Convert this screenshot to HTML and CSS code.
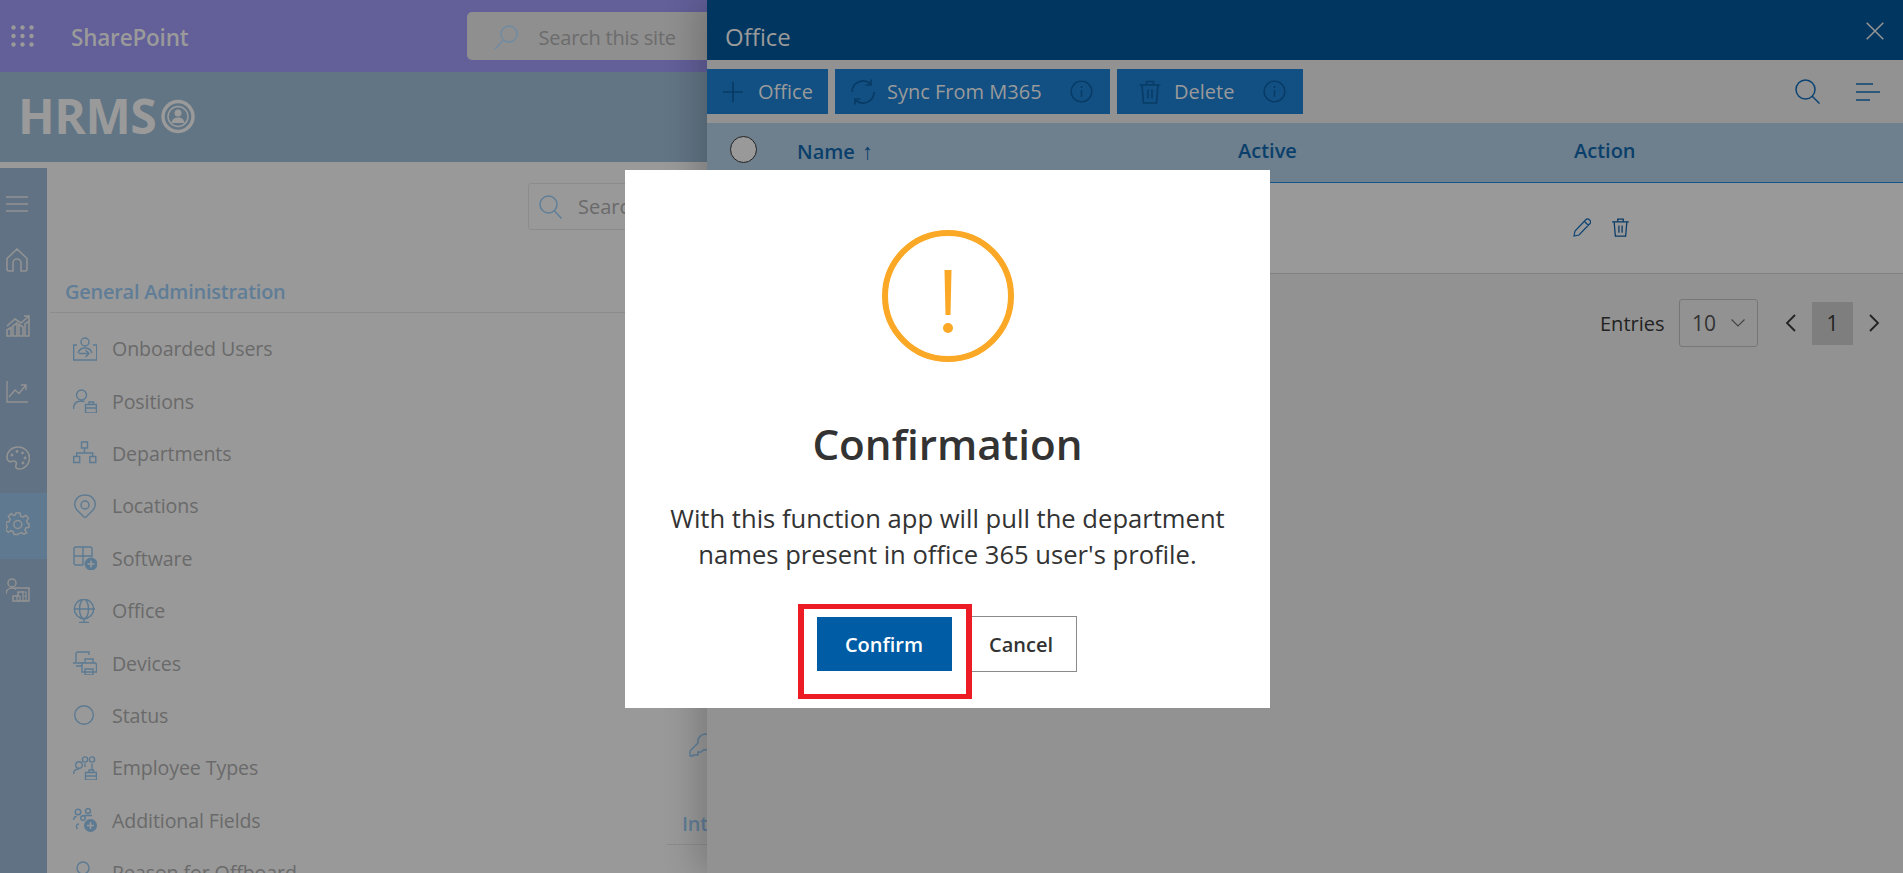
FILE: index.html
```html
<!DOCTYPE html>
<html lang="en">
<head>
<meta charset="utf-8">
<title>Office - HRMS</title>
<link rel="stylesheet" href="styles.css">
</head>
<body>
<svg class="defs" width="0" height="0" aria-hidden="true">
  <symbol id="i-trash" viewBox="0 0 24 24"><path d="M1.500 5h21M8.500 5V1.500h7V5M4 5l1.500 18h13L20 5M10 9.500v9M14 9.500v9" fill="none" stroke="currentColor" stroke-width="1.600"/></symbol>
  <symbol id="i-info" viewBox="0 0 24 24"><circle cx="12" cy="12" r="10.800" fill="none" stroke="currentColor" stroke-width="1.500"/><path d="M12 10.500v7" stroke="currentColor" stroke-width="1.500"/><circle cx="12" cy="7.300" r="1" fill="currentColor"/></symbol>
</svg>

<header class="topbar">
  <svg class="waffle" width="23" height="22" viewBox="0 0 23 22"><g fill="#9a9a9a"><circle cx="2.500" cy="2.500" r="2.200"/><circle cx="11.500" cy="2.500" r="2.200"/><circle cx="20.500" cy="2.500" r="2.200"/><circle cx="2.500" cy="11" r="2.200"/><circle cx="11.500" cy="11" r="2.200"/><circle cx="20.500" cy="11" r="2.200"/><circle cx="2.500" cy="19.500" r="2.200"/><circle cx="11.500" cy="19.500" r="2.200"/><circle cx="20.500" cy="19.500" r="2.200"/></g></svg>
  <span class="product">SharePoint</span>
  <div class="site-search">
    <svg width="26" height="26" viewBox="0 0 26 26"><circle cx="16" cy="10" r="8" fill="none" stroke="#6f8ba3" stroke-width="1.500"/><path d="M10.500 16 2 25" stroke="#6f8ba3" stroke-width="1.500"/></svg>
    <span>Search this site</span>
  </div>
</header>

<div class="brandbar">
  <span class="brand">HRMS</span>
  <svg width="34" height="35" viewBox="0 0 34 35"><circle cx="17" cy="17.500" r="15" fill="none" stroke="#9a9a9a" stroke-width="3.500"/><circle cx="17" cy="17.500" r="10" fill="none" stroke="#9a9a9a" stroke-width="1.500"/><circle cx="17" cy="14" r="3.500" fill="#9a9a9a"/><path d="M10.500 24c.5-4 3-5.500 6.500-5.500s6 1.500 6.500 5.500z" fill="#9a9a9a"/></svg>
</div>

<div class="main">
  <nav class="rail">
    <div class="rail-item rail-menu"><svg width="22" height="16" viewBox="0 0 22 16"><path d="M0 1h22M0 8h22M0 15h22" stroke="#929292" stroke-width="1.300"/></svg></div>
    <div class="rail-item"><svg width="22" height="24" viewBox="0 0 22 24"><path d="M1 10.500 11 1l10 9.500V21a2 2 0 0 1-2 2h-4v-8a3 3 0 0 0-8 0v8H3a2 2 0 0 1-2-2z" fill="none" stroke="#929292" stroke-width="1.600"/></svg></div>
    <div class="rail-item"><svg width="24" height="22" viewBox="0 0 24 22"><path d="M1 21v-6l4-2.500V21zM7 21V11l4-3v13zM13 21V9.500l4 2.500v9zM19 21V9l4-3v15z" fill="none" stroke="#929292" stroke-width="1.600"/><path d="M1 11 9 4l6 4 8-7M18 1h5v5" fill="none" stroke="#929292" stroke-width="1.600"/></svg></div>
    <div class="rail-item"><svg width="22" height="22" viewBox="0 0 22 22"><path d="M1 0v21h21M3 16l6-7 4 3.500L20 4M15 4h5v5" fill="none" stroke="#929292" stroke-width="1.400"/></svg></div>
    <div class="rail-item"><svg width="24" height="24" viewBox="0 0 24 24"><path d="M12 1C5.500 1 1 5.500 1 11.500c0 4 3 4.500 5.500 3.800 3-.8 4.500.7 3.500 3.700-.8 2.500.5 4 3 4 6 0 10.500-5 10.500-11S18.500 1 12 1z" fill="none" stroke="#929292" stroke-width="1.600"/><g fill="#929292"><circle cx="6" cy="9" r="1.400"/><circle cx="11" cy="5.500" r="1.400"/><circle cx="16.500" cy="7" r="1.400"/><circle cx="19" cy="12" r="1.400"/><circle cx="17" cy="17" r="1.400"/></g></svg></div>
    <div class="rail-item rail-active"><svg width="24" height="24" viewBox="0 0 24 24"><path d="M10 1h4l.7 3.200 2.200.9 2.800-1.800 2.800 2.800-1.800 2.800.9 2.200L23 11.800v3.400l-3.200.7-.9 2.200 1.800 2.800-2.800 1.300-2.200-1.500-2.700.6-1 1.300h-4l-.7-2.900-2.400-1-2.700 1.600-2.600-2.700 1.600-2.700-.9-2.300L0 13.800v-3.600l3.200-.7.900-2.300-1.700-2.800 2.800-2.600 2.700 1.700 1.400-.6z" fill="none" stroke="#929292" stroke-width="1.500"/><circle cx="11.800" cy="12.500" r="4" fill="none" stroke="#929292" stroke-width="1.500"/></svg></div>
    <div class="rail-item"><svg width="24" height="24" viewBox="0 0 24 24"><circle cx="6" cy="5" r="4" fill="none" stroke="#929292" stroke-width="1.500"/><path d="M0 16c0-3.500 2.500-6 6-6 1.500 0 3 .4 4 1.300" fill="none" stroke="#929292" stroke-width="1.500"/><path d="M9 10h14v13H7v-5h5v-4h6" fill="none" stroke="#929292" stroke-width="1.500"/><path d="M11 18h3v5h-3zM17 14h3v4h-3zM17 18h3v5h-3z" fill="none" stroke="#929292" stroke-width="1.200"/></svg></div>
  </nav>

  <section class="content">
    <div class="content-search">
      <div class="search-box">
        <svg width="23" height="24" viewBox="0 0 23 24"><circle cx="9.500" cy="9.500" r="8.500" fill="none" stroke="#5f7f99" stroke-width="1.500"/><path d="m15.500 16 7 7.500" stroke="#5f7f99" stroke-width="1.500"/></svg>
        <span>Search</span>
      </div>
    </div>
    <div class="columns">
      <div class="col-left">
        <h2 class="section-title">General Administration</h2>
        <ul class="menu">
          <li><svg viewBox="0 0 24 24"><path d="M4 8H.7v15h23V8H20" class="ln"/><circle cx="12" cy="5" r="4" class="ln"/><path d="M5 16c1-3 3.500-5 7-5s6 2 7 5M6 16.500h10M12.500 13l3.500 3.500-3.500 3.500" class="ln"/></svg>Onboarded Users</li>
          <li><svg viewBox="0 0 24 24"><circle cx="8.500" cy="6" r="5" class="ln"/><path d="M.5 20c0-5 3-8 8-8 1 0 2 .1 3 .5" class="ln"/><path d="M12.500 15.500h11V24h-11zM16 15.500V13h4.500v2.500M12.500 19h11" class="ln"/></svg>Positions</li>
          <li><svg viewBox="0 0 24 24"><path d="M8.500 1h6v6h-6zM.7 15.500h6v6h-6zM16.800 15.500h6v6h-6zM11.500 7v5M3.700 15.500V12h16v3.500" class="ln"/></svg>Departments</li>
          <li><svg viewBox="0 0 24 24"><path d="M12 24 4 16C-.500 11 2 1 12 1s12.500 10 8 15z" class="ln"/><circle cx="12" cy="11" r="4" class="ln"/></svg>Locations</li>
          <li><svg viewBox="0 0 24 24"><path d="M10 19H3a2 2 0 0 1-2-2V3a2 2 0 0 1 2-2h14a2 2 0 0 1 2 2v8M1 10h18M10 1v18" class="ln"/><circle cx="18" cy="18" r="6.500" class="fl"/><path d="M14.500 18h7M18 14.500v7" stroke="#999" stroke-width="1.500"/></svg>Software</li>
          <li><svg viewBox="0 0 24 24"><circle cx="11" cy="10" r="9.700" class="ln"/><ellipse cx="11" cy="10" rx="4.500" ry="9.700" class="ln"/><path d="M1 10h21M11 20v3M6 23.500h10" class="ln"/></svg>Office</li>
          <li><svg viewBox="0 0 24 24"><path d="M3 11V3a2 2 0 0 1 2-2h11v3M0 12h10M3 15h6" class="ln"/><path d="M9 12h13a2 2 0 0 1 1.500 2v7H9zM12 8h8v4h-8zM12 18h8v6h-8z" class="ln"/></svg>Devices</li>
          <li><svg viewBox="0 0 24 24"><circle cx="11" cy="12" r="9.300" class="ln"/></svg>Status</li>
          <li><svg viewBox="0 0 24 24"><circle cx="6" cy="9" r="3.300" class="ln"/><circle cx="12" cy="3.500" r="2.600" class="ln"/><circle cx="19" cy="3.500" r="2.600" class="ln"/><path d="M.5 18c0-3 2-5 5.500-5M12 7.500V11M19 7.500V14M12.500 16.500h11V24h-11zM16 16.500V14h4.500v2.500M12.500 20h11" class="ln"/></svg>Employee Types</li>
          <li><svg viewBox="0 0 24 24"><circle cx="5" cy="4" r="2.800" class="ln"/><circle cx="15" cy="3" r="2.500" class="ln"/><circle cx="10" cy="10" r="2.300" class="ln"/><path d="M.7 12c0-2 1-3.500 3-3.500M6 16c-2 0-4 2-1.500 5M11 7.500h8" class="ln"/><circle cx="17.500" cy="17.500" r="6.500" class="fl"/><path d="M14 17.500h7M17.500 14v7" stroke="#999" stroke-width="1.500"/></svg>Additional Fields</li>
          <li><svg viewBox="0 0 24 24"><circle cx="10" cy="7" r="6" class="ln"/><path d="M1 24c0-6 4-9 9-9" class="ln"/></svg>Reason for Offboard</li>
        </ul>
      </div>
      <div class="col-right">
        <svg class="key" width="28" height="24" viewBox="0 0 28 24"><path d="M4 23H1v-5l8-8c-1-5 3-9 8-9s9 4 9 8-4 8-9 8l-2-.5-3 2.500H9v3H4z" fill="none" stroke="#5f7f99" stroke-width="1.500"/></svg>
        <h2 class="section-title">Integration</h2>
      </div>
    </div>
  </section>
</div>

<aside class="panel">
  <div class="panel-head">
    <span class="panel-title">Office</span>
    <svg width="18" height="18" viewBox="0 0 18 18"><path d="M.7.700l16.600 16.600M17.300.700.700 17.300" stroke="#959595" stroke-width="1.500"/></svg>
  </div>
  <div class="toolbar">
    <button class="tool tool-add"><svg width="20" height="20" viewBox="0 0 20 20"><path d="M10 0v20M0 10h20" stroke="#083b66" stroke-width="1.700"/></svg>Office</button>
    <button class="tool tool-sync"><svg width="26" height="26" viewBox="0 0 26 26"><path d="M2 13A11 11 0 0 1 21 5.500M21 .5v5.500h-5.500M24 13A11 11 0 0 1 5 20.500M5 25.500V20h5.500" fill="none" stroke="#083b66" stroke-width="1.700"/></svg><span class="tool-label">Sync From M365</span><svg class="info" width="23" height="23"><use href="#i-info"/></svg></button>
    <button class="tool tool-del"><svg class="t-icon" width="24" height="24"><use href="#i-trash"/></svg><span class="tool-label">Delete</span><svg class="info" width="23" height="23"><use href="#i-info"/></svg></button>
    <div class="tool-right">
      <svg width="25" height="25" viewBox="0 0 25 25"><circle cx="10.500" cy="10.500" r="9.500" fill="none" stroke="#0b4373" stroke-width="1.500"/><path d="m17 17 7.500 7.500" stroke="#0b4373" stroke-width="1.500"/></svg>
      <svg width="24" height="18" viewBox="0 0 24 18"><path d="M0 1h17M0 9h24M0 17h14" stroke="#0b4373" stroke-width="1.500"/></svg>
    </div>
  </div>
  <div class="tbl-head">
    <div class="cell-check"><span class="radio"></span></div>
    <div class="cell-name">Name <span class="arrow">↑</span></div>
    <div class="cell-active">Active</div>
    <div class="cell-action">Action</div>
  </div>
  <div class="tbl-row">
    <div class="row-actions">
      <svg width="18" height="19" viewBox="0 0 18 19"><path d="M1 18l1-5L13 1.500a2 2 0 0 1 3 0l1 1a2 2 0 0 1 0 3L6 17zM11.500 3.500l4 4" fill="none" stroke="#0b4373" stroke-width="1.200"/></svg>
      <svg class="t-icon" width="19" height="19"><use href="#i-trash"/></svg>
    </div>
  </div>
  <div class="pager">
    <span class="pager-label">Entries</span>
    <div class="select"><span>10</span><svg width="14" height="8" viewBox="0 0 14 8"><path d="m.5.500 6.500 6.500 6.500-6.500" fill="none" stroke="#444" stroke-width="1.100"/></svg></div>
    <svg class="prev" width="12" height="18" viewBox="0 0 12 18"><path d="M10 1 2 9l8 8" fill="none" stroke="#222" stroke-width="1.800"/></svg>
    <span class="page">1</span>
    <svg class="next" width="12" height="18" viewBox="0 0 12 18"><path d="m2 1 8 8-8 8" fill="none" stroke="#222" stroke-width="1.800"/></svg>
  </div>
</aside>

<div class="dialog">
  <svg class="warn" width="132" height="132" viewBox="0 0 132 132"><circle cx="66" cy="66" r="63" fill="none" stroke="#faa825" stroke-width="6"/><path d="M62.500 40h7l-1 45h-5z" fill="#faa825"/><circle cx="66" cy="98" r="5" fill="#faa825"/></svg>
  <h1 class="dialog-title">Confirmation</h1>
  <p class="dialog-text">With this function app will pull the department<br>names present in office 365 user's profile.</p>
  <div class="dialog-actions">
    <button class="btn-confirm">Confirm<span class="callout"></span></button>
    <button class="btn-cancel">Cancel</button>
  </div>
</div>
</body>
</html>
```

FILE: styles.css
```css
* { box-sizing: border-box; }
html, body { margin: 0; height: 873px; overflow: hidden; }
body { background: #999; font-family: "Open Sans", "Liberation Sans", sans-serif; position: relative; color: #6a6a6a; }
.defs { position: absolute; }
svg { display: block; flex: none; }
button { font-family: inherit; border: 0; padding: 0; cursor: pointer; }

.topbar { height: 72px; background: #625f99; display: flex; align-items: center; padding-left: 11px; }
.product { margin: 2px 0 0 37px; font-size: 22.500px; font-weight: 600; color: #9a9a9a; letter-spacing: -.2px; }
.site-search { margin-left: 279px; width: 360px; height: 48px; background: #8f8f8f; border-radius: 5px; display: flex; align-items: center; padding: 2px 0 0 26px; gap: 19px; font-size: 20px; color: #6c6c6c; letter-spacing: -.2px; }

.brandbar { height: 90px; background: #627585; display: flex; align-items: center; padding: 0 0 2px 18px; gap: 5px; }
.brand { font-size: 48px; font-weight: 700; color: #9a9a9a; line-height: 1; letter-spacing: -.5px; }

.main { margin-top: 6px; display: flex; height: 705px; }
.rail { width: 47px; background: #607284; flex: none; display: flex; flex-direction: column; padding-top: 3px; }
.rail-item { height: 66px; display: flex; align-items: center; padding-left: 6px; flex: none; }
.rail-menu { height: 56px; padding-top: 10px; }
.rail-active { background: #5f7a90; margin: 2px 0 -2px; padding-bottom: 4px; }

.content { flex: 1; min-width: 0; }
.content-search { height: 111.500px; padding: 15px 0 0 481px; }
.search-box { width: 400px; height: 47px; border: 1px solid #8c8c8c; border-radius: 3px; display: flex; align-items: center; padding-left: 10px; gap: 16px; font-size: 20px; color: #6a6a6a; }
.columns { display: grid; grid-template-columns: 620px 1fr; }
.col-left { padding-left: 3px; }
.section-title { margin: 0; font-size: 19.900px; font-weight: 600; line-height: 23px; color: #607d97; letter-spacing: -.2px; padding: 0 0 9px 15px; border-bottom: 1px solid #8c8c8c; height: 23px; box-sizing: content-box; }
.menu { list-style: none; margin: 10px 0 0; padding: 0 0 0 23px; }
.menu li { height: 52.400px; display: flex; align-items: center; gap: 15px; font-size: 19.600px; color: #6a6a6a; letter-spacing: -.1px; }
.menu svg { width: 24px; height: 24px; }
.ln { fill: none; stroke: #5c7a92; stroke-width: 1.400; }
.fl { fill: #5c7a92; }
.col-right { padding-top: 453px; }
.key { margin: 0 0 55px 22px; }

.panel { position: absolute; left: 707px; top: 0; right: 0; bottom: 0; background: #929292; box-shadow: -12px 0 30px rgba(0,0,0,.18); display: flex; flex-direction: column; }
.panel-head { height: 60px; background: #003660; display: flex; align-items: center; justify-content: space-between; padding: 2px 19px 0 18px; }
.panel-title { font-size: 24px; color: #9a9a9a; margin-top: 10px; }
.toolbar { height: 63px; display: flex; align-items: flex-start; padding-top: 9px; gap: 7px; }
.tool { height: 45px; background: #125083; color: #9a9a9a; font-size: 20px; display: flex; align-items: center; }
.tool-add { width: 121px; padding-left: 16px; gap: 15px; }
.tool-sync { width: 275px; padding-left: 15px; gap: 11px; }
.tool-del { width: 186px; padding-left: 21px; gap: 12px; }
.tool-label { white-space: nowrap; }
.info { margin-left: auto; margin-right: 17px; color: #083b66; }
.t-icon { color: #083b66; }
.tool-right { margin-left: auto; height: 45px; display: flex; align-items: center; gap: 36px; padding-right: 23px; }
.tbl-head { height: 60px; padding-bottom: 5px; background: #6e7f8d; border-bottom: 1px solid #10568f; display: grid; grid-template-columns: 90px 441px 336px 1fr; align-items: center; font-size: 20px; font-weight: 600; color: #0a3f6b; }
.cell-check { padding: 0 0 2px 23px; }
.radio { display: block; width: 27px; height: 27px; border-radius: 50%; border: 1.500px solid #222; background: #999; }
.arrow { font-weight: 400; font-size: 22px; margin-left: 2px; }
.tbl-row { height: 91px; background: #999; border-bottom: 1px solid #808080; padding: 35px 0 0 866px; }
.row-actions { display: flex; gap: 20px; }
.pager { display: flex; align-items: center; height: 48px; margin-top: 25px; padding-left: 893px; font-size: 20px; color: #222; }
.pager-label { width: 79px; padding-top: 1px; }
.select { width: 79px; height: 48px; border: 1px solid #777; border-radius: 3px; display: flex; align-items: center; padding-left: 12px; gap: 15px; font-size: 21px; color: #333; }
.prev { margin-left: 27px; }
.page { width: 41px; height: 43px; margin: 0 15px 0 15px; background: #7e7e7e; display: flex; align-items: center; justify-content: center; font-size: 21px; }

.dialog { position: absolute; left: 625px; top: 170px; width: 645px; height: 538px; background: #fff; display: flex; flex-direction: column; align-items: center; padding-top: 60px; }
.dialog-title { margin: 54px 0 0; font-size: 42.200px; font-weight: 600; line-height: 56px; color: #333; }
.dialog-text { margin: 29px 0 0; font-size: 25.600px; line-height: 36px; text-align: center; color: #333; }
.dialog-actions { margin: 43px 0 0 -2px; display: flex; align-items: center; gap: 14px; }
.btn-confirm { position: relative; width: 135px; height: 54px; background: #005ca4; color: #fff; font-size: 20px; font-weight: 600; }
.callout { position: absolute; left: -19px; top: -13px; width: 174px; height: 95px; border-style: solid; border-width: 5px 6px; border-color: #ed1c24; }
.btn-cancel { width: 111px; height: 56px; background: #fff; border: 1px solid #8a8a8a; color: #333; font-size: 20px; font-weight: 600; }
```
